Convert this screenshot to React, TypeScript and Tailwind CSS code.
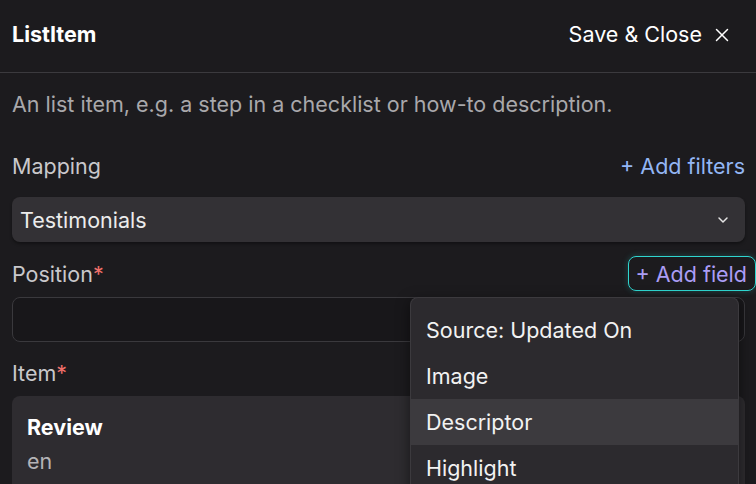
import { ChevronDown, X } from "lucide-react";

const menuItems = ["Source: Updated On", "Image", "Descriptor", "Highlight"];

function Label({ text, required }: { text: string; required?: boolean }) {
  return (
    <span className="text-[21.5px] leading-[28px] text-[#c9c8cb]">
      {text}
      {required && <span className="text-[#f0706a]">*</span>}
    </span>
  );
}

export default function App() {
  return (
    <div className="h-[484px] w-[756px] overflow-hidden bg-[#1c1b1e] font-['Inter',sans-serif]">
      <div className="flex h-[73px] items-center justify-between border-b border-[#3b3a3e] pb-[3px] pl-3 pr-[23px]">
        <span className="text-[21.5px] font-bold text-white">ListItem</span>
        <button className="flex items-center gap-[9px] text-[21.5px] text-white">
          Save &amp; Close
          <X size={22} strokeWidth={1.6} />
        </button>
      </div>

      <div className="pl-3 pr-[11px]">
        <p className="mt-[17px] text-[21.5px] leading-[28px] text-[#a9a8ab]">
          An list item, e.g. a step in a checklist or how-to description.
        </p>

        <div className="mt-[34px] flex items-center justify-between">
          <Label text="Mapping" />
          <span className="text-[21.5px] leading-[28px] text-[#93b6f4]">+ Add filters</span>
        </div>

        <div className="mt-[17px] flex h-[45px] items-center justify-between rounded-[8px] bg-[#333135] pl-[8px] pr-[9px] shadow-[0_2px_3px_rgba(0,0,0,0.35)]">
          <span className="text-[21.5px] leading-[28px] text-[#ececec]">Testimonials</span>
          <ChevronDown size={16} strokeWidth={2.2} className="mr-[5px] text-[#e5e5e5]" />
        </div>

        <div className="relative">
          <div className="mt-[14px] flex h-[35px] items-center justify-between">
            <Label text="Position" required />
            <span className="-mr-[11px] flex h-[35px] items-center rounded-[8px] border border-[#2fd6d0] pl-[6px] pr-[8px] text-[21.5px] leading-[28px] text-[#ab9df5] shadow-[0_0_6px_rgba(47,214,208,0.25)]">
              + Add field
            </span>
          </div>

          <div className="mt-[6px] h-[45px] rounded-[8px] border border-[#3a393d] bg-[#18171a]" />

          <div className="mt-[17px] flex">
            <Label text="Item" required />
          </div>

          <div className="mt-[9px] h-[120px] rounded-[8px] bg-[#2e2c30] px-[15px] pt-[17px]">
            <div className="text-[21.5px] font-bold leading-[28px] text-white">Review</div>
            <div className="mt-[6px] text-[21.5px] leading-[28px] text-[#b4b3b6]">en</div>
          </div>

          <div className="absolute left-[398px] top-[41px] w-[329px] rounded-t-[8px] border border-b-0 border-[#3c3a3e] bg-[#2c2a2e] pt-[9px] shadow-[0_4px_14px_rgba(0,0,0,0.5)]">
            {menuItems.map((item) => (
              <div
                key={item}
                className={
                  item === "Descriptor"
                    ? "flex h-[46px] items-center bg-[#3c3a3e] px-[15px] text-[21.5px] text-[#f2f2f2]"
                    : "flex h-[46px] items-center px-[15px] text-[21.5px] text-[#f2f2f2]"
                }
              >
                {item}
              </div>
            ))}
          </div>
        </div>
      </div>
    </div>
  );
}
